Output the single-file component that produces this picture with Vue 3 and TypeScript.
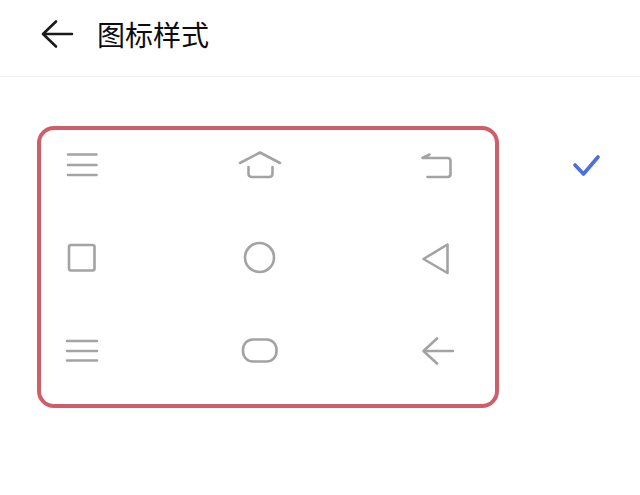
<script setup lang="ts">
interface GlyphIcon {
  name: string
  col: number
  row: number
  d: string
}

const colX = [52, 230, 408]
const rowY = [143, 236, 329]

const icons: GlyphIcon[] = [
  { name: 'menu', col: 0, row: 0, d: 'M68 154.5H96.5M68 165H96.5M68 175H96.5' },
  { name: 'home', col: 1, row: 0, d: 'M240 163L260 152.5L280 163M248.5 167V173.5Q248.5 177 252 177H269Q272.5 177 272.5 173.5V167' },
  { name: 'return', col: 2, row: 0, d: 'M429.5 154.5L422.5 158H447.5Q450.5 158 450.5 161V174Q450.5 177 447.5 177H427.5' },
  { name: 'square', col: 0, row: 1, d: 'M71 245H92.5Q94.5 245 94.5 247V268.5Q94.5 270.5 92.5 270.5H71Q69 270.5 69 268.5V247Q69 245 71 245Z' },
  { name: 'circle', col: 1, row: 1, d: 'M274 257.5A14.5 14.5 0 1 1 245 257.5A14.5 14.5 0 1 1 274 257.5Z' },
  { name: 'triangle', col: 2, row: 1, d: 'M423.5 259L447.5 244.5V273Z' },
  { name: 'menu-wide', col: 0, row: 2, d: 'M67 341H97M67 351H97M67 360.5H97' },
  { name: 'pill', col: 1, row: 2, d: 'M253 339.5H266.5A10 10 0 0 1 276.5 349.5V351.5A10 10 0 0 1 266.5 361.5H253A10 10 0 0 1 243 351.5V349.5A10 10 0 0 1 253 339.5Z' },
  { name: 'back', col: 2, row: 2, d: 'M453 351H424M437 338.5L423.5 351L437 363.5' },
]

function box(icon: GlyphIcon): string {
  return `${colX[icon.col]} ${rowY[icon.row]} 60 44`
}
</script>

<template>
  <div class="page">
    <header class="top">
      <svg class="back" viewBox="0 0 36 32" width="36" height="32" aria-hidden="true">
        <path d="M33 16H4.5M17 3.5L4 16L17 28.5" />
      </svg>
      <h1 class="title">图标样式</h1>
    </header>
    <main class="option">
      <div class="frame">
        <svg
          v-for="icon in icons"
          :key="icon.name"
          class="glyph"
          :viewBox="box(icon)"
          width="60"
          height="44"
          aria-hidden="true"
        >
          <path :d="icon.d" />
        </svg>
      </div>
      <svg class="check" viewBox="0 0 30 24" width="30" height="24" aria-hidden="true">
        <path d="M3 10L11.5 19L26 2" />
      </svg>
    </main>
  </div>
</template>

<style>
html,
body {
  margin: 0;
  background: #fff;
}
</style>

<style scoped>
.page {
  width: 640px;
  height: 495px;
  background: #fff;
  font-family: "Noto Sans CJK SC", "Noto Sans", sans-serif;
  overflow: hidden;
}

.top {
  box-sizing: border-box;
  height: 77px;
  display: flex;
  align-items: center;
  padding: 0 0 8px 39px;
  border-bottom: 1px solid #f4f4f4;
}

.back {
  flex: none;
  margin-right: 22px;
}

.back path {
  fill: none;
  stroke: #1a1a1a;
  stroke-width: 2.6;
  stroke-linecap: round;
  stroke-linejoin: round;
}

.title {
  margin: 0;
  font-size: 28px;
  line-height: 40px;
  font-weight: 400;
  color: #0d0d0d;
}

.option {
  display: flex;
  align-items: flex-start;
  padding: 48.5px 0 0 36.5px;
}

.frame {
  box-sizing: border-box;
  width: 462.5px;
  height: 282px;
  border: 4px solid #cf5e68;
  border-radius: 17px;
  padding: 13.5px 0 0 11.5px;
  display: grid;
  grid-template-columns: repeat(3, 60px);
  grid-template-rows: repeat(3, 44px);
  column-gap: 118px;
  row-gap: 49px;
  align-content: start;
}

.glyph {
  display: block;
}

.glyph path {
  fill: none;
  stroke: #a3a3a3;
  stroke-width: 2.6;
  stroke-linecap: round;
  stroke-linejoin: round;
}

.check {
  flex: none;
  margin: 29.5px 0 0 72.5px;
}

.check path {
  fill: none;
  stroke: #4a6fe0;
  stroke-width: 3.6;
  stroke-linecap: round;
  stroke-linejoin: round;
}
</style>
